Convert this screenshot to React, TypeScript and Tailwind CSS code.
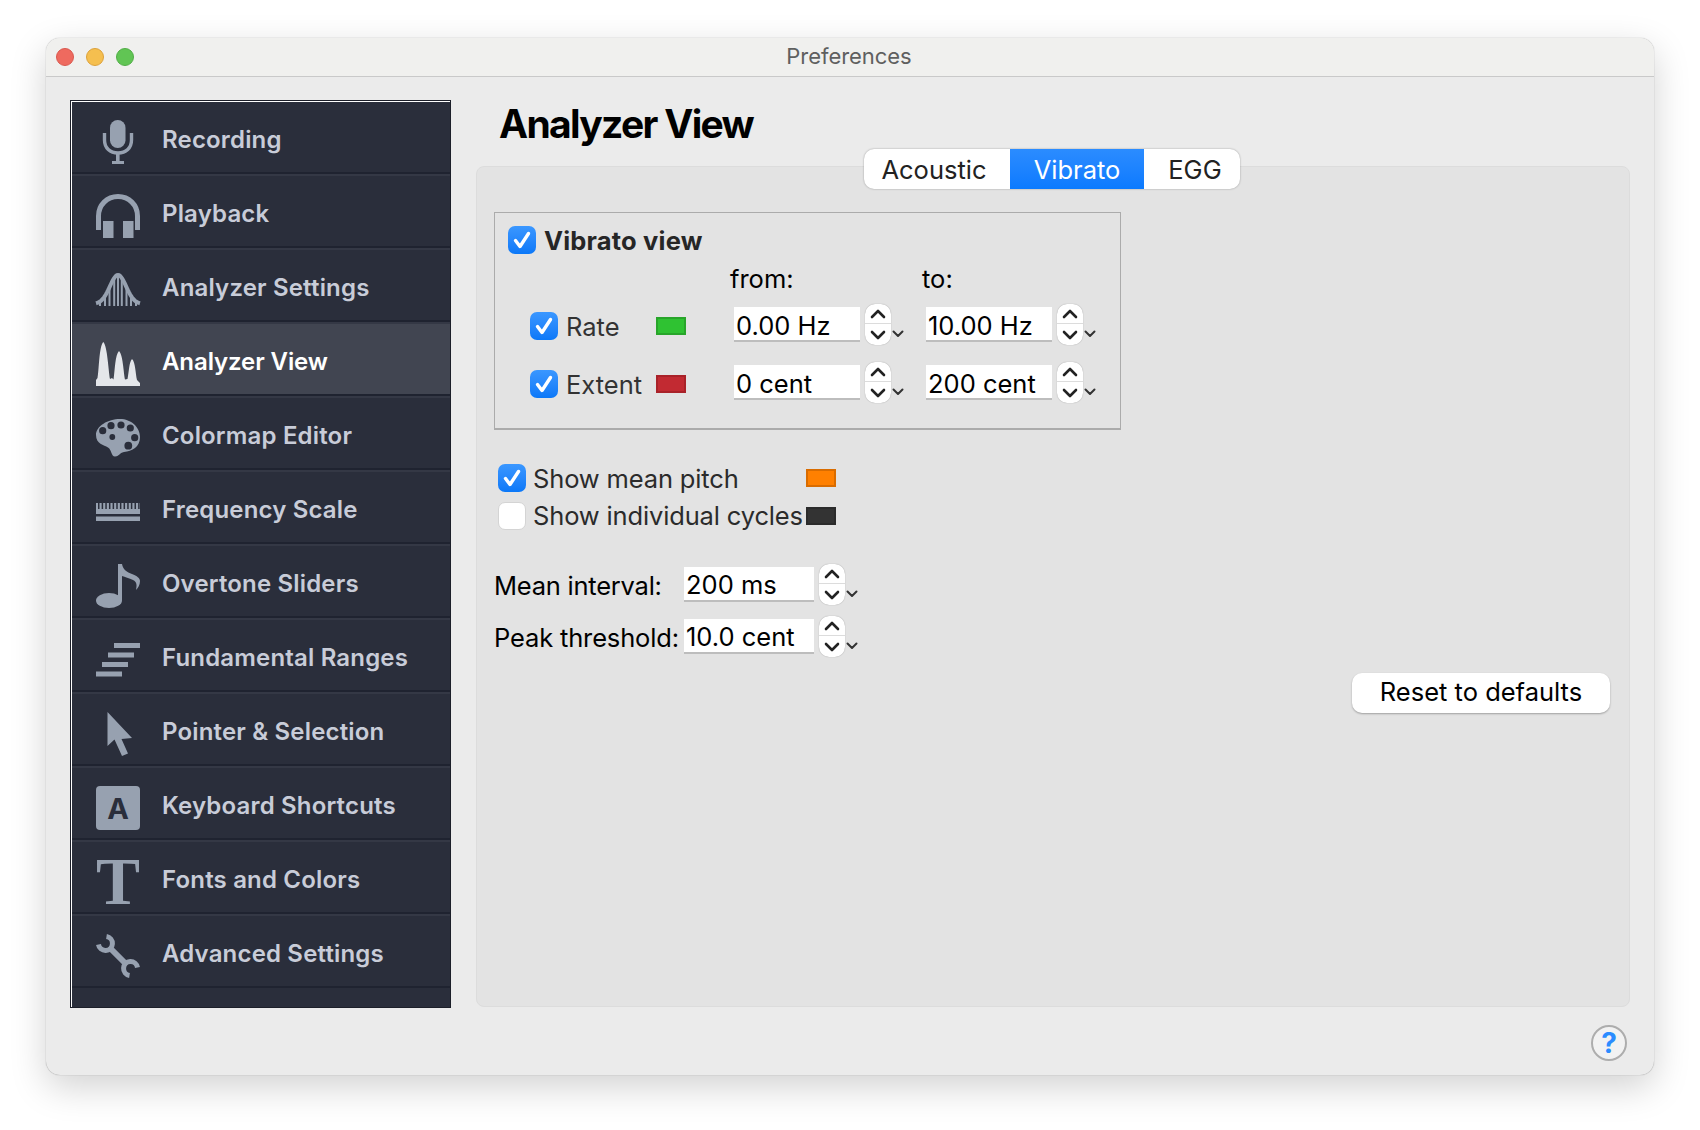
import type { ReactNode } from 'react';

const FONT = 'font-["Inter","Noto_Sans",sans-serif]';

function Mic() {
  return (
    <>
      <rect x="14" y="0" width="15.5" height="28" rx="7.7" fill="currentColor" />
      <path d="M8.5 13V20C8.5 28 14 33 22 33C30 33 35.5 28 35.5 20V13" fill="none" stroke="currentColor" strokeWidth="3.4" />
      <rect x="20" y="33" width="3.6" height="9" fill="currentColor" />
      <rect x="16" y="41" width="12" height="3" fill="currentColor" />
    </>
  );
}

function Headphones() {
  return (
    <>
      <path d="M2.5 36V22C2.5 11 11 2.5 22 2.5C33 2.5 41.5 11 41.5 22V36" fill="none" stroke="currentColor" strokeWidth="5" />
      <rect x="7" y="27" width="10.5" height="17" fill="currentColor" />
      <rect x="27" y="27" width="10.5" height="17" fill="currentColor" />
    </>
  );
}

// bell curve height at x, used for the outline and for the tops of the bars
const bellY = (x: number) => 7 + 29 * (1 - Math.exp(-(((x - 22) / 11.5) ** 2)));

function Bell() {
  const bars = [4, 9, 13.5, 18.2, 22, 25.8, 30.5, 35, 40];
  const line = Array.from({ length: 45 }, (_, x) => `${x === 0 ? 'M' : 'L'}${x} ${bellY(x).toFixed(2)}`).join('');
  return (
    <>
      <path d={line} fill="none" stroke="currentColor" strokeWidth="4" />
      {bars.map((x) => (
        <line key={x} x1={x} x2={x} y1={bellY(x)} y2="38" stroke="currentColor" strokeWidth="2" />
      ))}
    </>
  );
}

function Peaks() {
  return (
    <path
      d="M0 44V38L1.5 36C3 30 3 4 7.3 0C11.5 4 12.5 30 14 37L16 36L17.5 37.5C19 28 19 13 23 9C27 13 27.5 30 29 37.5L31.5 37C33 30 33 20 36 17C39.5 20 39.5 32 41 38L44 41V44Z"
      fill="currentColor"
    />
  );
}

function Palette() {
  const holes = [
    [6.7, 14.7, 3.6],
    [15, 9.7, 3.6],
    [25, 9, 3.6],
    [34.3, 12, 3.6],
    [38.7, 21.7, 3.6],
    [32.3, 29.7, 3.9],
    [16.3, 21, 2.9],
  ];
  return (
    <>
      <path
        d="M24 3C35 3 44 11 44 21C44 31 36 35 28 36C23 37 24 40 19 40.500C15 40.500 16 34 12 31.500C8 29 0 28 0 19C0 10 12 3 24 3Z"
        fill="currentColor"
      />
      {holes.map(([cx, cy, r]) => (
        <circle key={cx} cx={cx} cy={cy} r={r} fill="#2a2e3b" />
      ))}
    </>
  );
}

function Ruler() {
  const ticks = Array.from({ length: 12 }, (_, i) => 2 + i * 3.65);
  return (
    <>
      <rect x="0" y="13" width="44" height="11" fill="currentColor" />
      {ticks.map((x) => (
        <rect key={x} x={x} y="13" width="1.5" height="6" fill="#2a2e3b" />
      ))}
      <rect x="0" y="26.500" width="44" height="4.500" fill="currentColor" />
    </>
  );
}

function Note() {
  return (
    <>
      <ellipse cx="13" cy="36.500" rx="13" ry="7.500" fill="currentColor" />
      <rect x="22" y="0" width="4" height="36" fill="currentColor" />
      <path d="M26 0C27 6 31 8 36 10C41 12 44 14 44 17C44 21 42 24 40 26C41 21 41 18 37 16C33 14 29 13 26 12Z" fill="currentColor" />
    </>
  );
}

function Ranges() {
  return (
    <>
      <rect x="18" y="5" width="26" height="5" fill="currentColor" />
      <rect x="12" y="14.500" width="26" height="5" fill="currentColor" />
      <rect x="6" y="24" width="26" height="5" fill="currentColor" />
      <rect x="0" y="33.500" width="26" height="5" fill="currentColor" />
    </>
  );
}

function Pointer() {
  return <path d="M11.500 0V34L18.500 27.500L26 44L32 41.500L25.500 27L36 26Z" fill="currentColor" />;
}

function KeyCap() {
  return (
    <>
      <rect x="0" y="0" width="44" height="44" rx="4" fill="currentColor" />
      <text x="22" y="33" textAnchor="middle" fontFamily="Inter, sans-serif" fontWeight="700" fontSize="29" fill="#2a2e3b">
        A
      </text>
    </>
  );
}

function SerifT() {
  return (
    <text x="0" y="44" textLength="44" lengthAdjust="spacingAndGlyphs" fontFamily="Liberation Serif, serif" fontWeight="700" fontSize="67" fill="currentColor">
      T
    </text>
  );
}

function Wrench() {
  return (
    <g fill="none" stroke="currentColor" strokeWidth="5">
      <path d="M10.500 2.500A7 7 0 1 1 2.500 10.500" />
      <path d="M33.500 41.500A7 7 0 1 1 41.500 33.500" />
      <path d="M14 14L30 30" strokeWidth="6" />
    </g>
  );
}

const items: { label: string; icon: ReactNode; active?: boolean }[] = [
  { label: 'Recording', icon: <Mic /> },
  { label: 'Playback', icon: <Headphones /> },
  { label: 'Analyzer Settings', icon: <Bell /> },
  { label: 'Analyzer View', icon: <Peaks />, active: true },
  { label: 'Colormap Editor', icon: <Palette /> },
  { label: 'Frequency Scale', icon: <Ruler /> },
  { label: 'Overtone Sliders', icon: <Note /> },
  { label: 'Fundamental Ranges', icon: <Ranges /> },
  { label: 'Pointer & Selection', icon: <Pointer /> },
  { label: 'Keyboard Shortcuts', icon: <KeyCap /> },
  { label: 'Fonts and Colors', icon: <SerifT /> },
  { label: 'Advanced Settings', icon: <Wrench /> },
];

function NavRow({ label, icon, active, last }: { label: string; icon: ReactNode; active?: boolean; last: boolean }) {
  return (
    <div className="h-[74px] flex flex-col shrink-0">
      <div className={`h-[70px] flex items-center pl-[24px] ${active ? 'bg-[#414551]' : ''}`}>
        <svg viewBox="0 0 44 44" className={`w-[44px] h-[44px] mt-[10px] shrink-0 overflow-visible ${active ? 'text-[#e4e6ea]' : 'text-[#97a1b0]'}`}>
          {icon}
        </svg>
        <span className={`ml-[22px] mt-[5px] text-[24px] font-semibold ${active ? 'text-white tracking-[-0.1px]' : 'text-[#c8ccd8] tracking-[0.17px]'}`}>{label}</span>
      </div>
      <div className="h-[2px] bg-[#1f2330]" />
      <div className={`h-[2px] ${last ? '' : 'bg-[#343845]'}`} />
    </div>
  );
}

function Sidebar() {
  return (
    <div className="w-[381px] h-[908px] shrink-0 border border-[#1c1f29]">
      <div className="h-full border-l border-t border-white bg-[#2a2e3b] flex flex-col">
        {items.map((it, i) => (
          <NavRow key={it.label} {...it} last={i === items.length - 1} />
        ))}
      </div>
    </div>
  );
}

function Check({ on = true }: { on?: boolean }) {
  if (!on) {
    return <div className="w-[28px] h-[28px] shrink-0 rounded-[7px] bg-white border border-[#d4d4d4]" />;
  }
  return (
    <div className="w-[28px] h-[28px] shrink-0 rounded-[7px] bg-gradient-to-b from-[#3a97ff] to-[#0a78f8] flex items-center justify-center">
      <svg viewBox="0 0 28 28" className="w-[28px] h-[28px]">
        <path d="M7.500 14.500L12 20.500L20.500 7.500" fill="none" stroke="white" strokeWidth="3.400" strokeLinecap="round" strokeLinejoin="round" />
      </svg>
    </div>
  );
}

function Swatch({ cls }: { cls: string }) {
  return <div className={`w-[30px] h-[18px] shrink-0 border-2 ${cls}`} />;
}

function Spin({ value, w = 'w-[126px]', pad = 'pt-[6px]' }: { value: string; w?: string; pad?: string }) {
  return (
    <div className="flex items-center h-[41px]">
      <div className={`${w} ${pad} pl-[2px] h-[35px] bg-white border-b-2 border-[#bdbdbd] flex items-center text-[25.500px] text-black whitespace-nowrap`}>{value}</div>
      <div className="ml-[5px] w-[26px] h-[41px] rounded-[10px] bg-white shadow-[0_0_1px_rgba(0,0,0,0.4)] flex flex-col">
        <div className="h-[20px] flex items-center justify-center border-b border-[#dcdcdc]">
          <svg viewBox="0 0 16 10" className="w-[16px] h-[10px]">
            <path d="M2 8L8 2L14 8" fill="none" stroke="#222" strokeWidth="2.600" strokeLinecap="round" strokeLinejoin="round" />
          </svg>
        </div>
        <div className="h-[21px] flex items-center justify-center">
          <svg viewBox="0 0 16 10" className="w-[16px] h-[10px]">
            <path d="M2 2L8 8L14 2" fill="none" stroke="#222" strokeWidth="2.600" strokeLinecap="round" strokeLinejoin="round" />
          </svg>
        </div>
      </div>
      <svg viewBox="0 0 12 8" className="w-[12px] h-[8px] mt-[18px] ml-px">
        <path d="M1.500 1.500L6 6L10.500 1.500" fill="none" stroke="#333" strokeWidth="2" strokeLinecap="round" strokeLinejoin="round" />
      </svg>
    </div>
  );
}

function VibratoBox() {
  return (
    <div className="w-[627px] h-[218px] border border-b-2 border-[#ababab] pl-[13px] pt-[13px] flex flex-col">
      <div className="flex items-center gap-[8px] h-[28px]">
        <Check />
        <span className="text-[25.500px] font-bold tracking-[0.18px] text-[#262626] mt-[2px]">Vibrato view</span>
      </div>
      <div className="flex h-[30px] mt-[10px] items-center text-[25.500px] text-black">
        <span className="ml-[222px] w-[192px]">from:</span>
        <span>to:</span>
      </div>
      <div className="mt-[10px]">
        <RateRow label="Rate" swatch="bg-[#2fc232] border-[#28a52a]" from="0.00 Hz" to="10.00 Hz" />
      </div>
      <div className="mt-[17px]">
        <RateRow label="Extent" swatch="bg-[#c22a32] border-[#a92229]" from="0 cent" to="200 cent" />
      </div>
    </div>
  );
}

function RateRow({ label, swatch, from, to }: { label: string; swatch: string; from: string; to: string }) {
  return (
    <div className="flex items-center h-[41px] pl-[22px]">
      <div className="flex items-center mt-[3px]">
        <Check />
        <span className="ml-[8px] w-[90px] mt-[3px] text-[25.500px] text-[#333]">{label}</span>
        <Swatch cls={swatch} />
      </div>
      <div className="ml-[48px]">
        <Spin value={from} />
      </div>
      <div className="ml-[22px]">
        <Spin value={to} />
      </div>
    </div>
  );
}

function Panel() {
  return (
    <div className="h-[841px] -mt-[23px] bg-[#e3e3e3] border border-[#dcdcdc] rounded-[8px] pl-[17px] pt-[45px] pr-[19px] flex flex-col">
      <VibratoBox />
      <div className="mt-[34px] pl-[4px] flex flex-col gap-[10px]">
        <div className="flex items-center h-[28px]">
          <Check />
          <span className="ml-[7px] w-[273px] mt-[2px] text-[25.500px] tracking-[-0.15px] text-[#2b2b2b] whitespace-nowrap">Show mean pitch</span>
          <Swatch cls="bg-[#ff8000] border-[#d96c00]" />
        </div>
        <div className="flex items-center h-[28px]">
          <Check on={false} />
          <span className="ml-[7px] w-[273px] text-[25.500px] tracking-[-0.15px] text-[#2b2b2b] whitespace-nowrap">Show individual cycles</span>
          <Swatch cls="bg-[#333] border-[#2b2b2b]" />
        </div>
      </div>
      <div className="mt-[34px] flex flex-col gap-[11px]">
        <div className="flex items-center h-[41px]">
          <span className="w-[190px] mt-[4px] text-[25.500px] tracking-[-0.23px] text-black whitespace-nowrap">Mean interval:</span>
          <Spin value="200 ms" w="w-[130px]" pad="pt-[4px]" />
        </div>
        <div className="flex items-center h-[41px]">
          <span className="w-[190px] mt-[4px] text-[25.500px] tracking-[-0.15px] text-black whitespace-nowrap">Peak threshold:</span>
          <Spin value="10.0 cent" w="w-[130px]" pad="pt-[4px]" />
        </div>
      </div>
      <button className="mt-[16px] pb-[2px] self-end w-[258px] h-[40px] rounded-[10px] bg-white shadow-[0_1px_2px_rgba(0,0,0,0.3)] text-[25.500px] text-black">
        Reset to defaults
      </button>
    </div>
  );
}

function Tabs() {
  return (
    <div className="flex justify-center relative z-10 h-[40px] mt-[2px] pr-[2px]">
      <div className="flex rounded-[10px] overflow-hidden bg-white shadow-[0_0_2px_rgba(0,0,0,0.35)] text-[25.500px]">
        <div className="w-[146px] pr-[6px] pt-[2px] flex items-center justify-center text-[#222]">Acoustic</div>
        <div className="w-[134px] pt-[2px] flex items-center justify-center text-white bg-gradient-to-b from-[#2b8cff] to-[#0a7aff]">Vibrato</div>
        <div className="w-[96px] pl-[6px] pt-[2px] flex items-center justify-center text-[#222]">EGG</div>
      </div>
    </div>
  );
}

export default function App() {
  return (
    <div className={`${FONT} w-[1700px] h-[1130px] bg-white pt-[38px] pl-[46px] overflow-hidden`}>
      <div className="w-[1608px] h-[1037px] rounded-[14px] bg-[#ebebeb] shadow-[0_12px_36px_rgba(0,0,0,0.18),0_0_1px_rgba(0,0,0,0.45)] flex flex-col overflow-hidden">
        <div className="h-[39px] shrink-0 bg-[#f0f0ee] border-b border-[#c9c9c9] grid grid-cols-[1fr_auto_1fr] items-center">
          <div className="flex gap-[12px] pl-[10px] -mt-px">
            <div className="w-[18px] h-[18px] rounded-full bg-[#ee6a5f] border border-[#d9584e]" />
            <div className="w-[18px] h-[18px] rounded-full bg-[#f5bf4f] border border-[#dca13a]" />
            <div className="w-[18px] h-[18px] rounded-full bg-[#61c554] border border-[#51ad46]" />
          </div>
          <div className="text-[22px] text-[#5f5f5f] tracking-[-0.05px] mr-[2px] -mt-px">Preferences</div>
          <div />
        </div>
        <div className="flex pl-[24px] pt-[23px]">
          <Sidebar />
          <div className="ml-[25px] w-[1154px] flex flex-col">
            <div className="pl-[23px] h-[46px] mt-px text-[39px] leading-[46px] font-bold tracking-[-1.680px] text-black">Analyzer View</div>
            <Tabs />
            <Panel />
            <div className="flex justify-end mt-[18px] pr-[3px]">
              <div className="w-[36px] h-[36px] rounded-full border-2 border-[#adadad] bg-[#f2f2f2] flex items-center justify-center text-[28px] font-bold text-[#2b8cff] leading-none">?</div>
            </div>
          </div>
        </div>
      </div>
    </div>
  );
}
